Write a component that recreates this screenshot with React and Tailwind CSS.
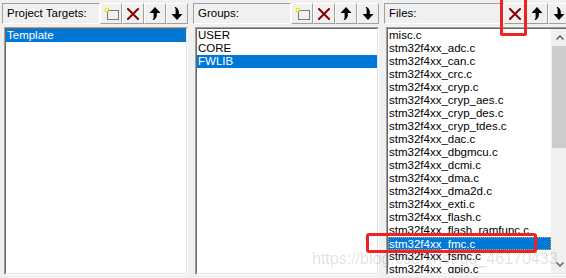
import React from "react";

function NewIcon() {
  return (
    <svg width="15" height="14" viewBox="0 0 15 14">
      <rect x="3.5" y="3.5" width="11" height="9" fill="none" stroke="#000" strokeDasharray="1 1" />
      <path d="M3 0.5v5M0.5 3h5M1 1l4 4M5 1l-4 4" stroke="#e8d800" strokeWidth="1" />
      <rect x="2" y="2" width="2" height="2" fill="#fff8a0" />
    </svg>
  );
}

function DelIcon() {
  return (
    <svg width="12" height="12" viewBox="0 0 12 12">
      <path d="M1 1L11 11M11 1L1 11" stroke="#8a0000" strokeWidth="2" strokeLinecap="square" />
    </svg>
  );
}

function UpIcon() {
  return (
    <svg width="12" height="13" viewBox="0 0 12 13">
      <path d="M6 0L11.5 6H7.8V9L6.6 11.4L4.8 13H3.6L4.6 11V6H0.5Z" fill="#000" />
    </svg>
  );
}

function DownIcon() {
  return (
    <svg width="12" height="13" viewBox="0 0 12 13">
      <path d="M6 13L11.5 7H7.8V4L6.6 1.6L4.8 0H3.6L4.6 2V7H0.5Z" fill="#000" />
    </svg>
  );
}

const ICONS = { new: NewIcon, del: DelIcon, up: UpIcon, down: DownIcon };

function Header({ label, buttons }) {
  return (
    <div className="flex h-[21px]">
      <div className="flex-1 flex items-center pl-[4px] border border-t-[#a0a0a0] border-l-[#a0a0a0] border-r-white border-b-white">
        {label}
      </div>
      {buttons.map((b) => {
        const I = ICONS[b];
        return (
          <div
            key={b}
            className="w-[22px] h-[21px] flex items-center justify-center border border-t-white border-l-white border-r-[#a0a0a0] border-b-[#a0a0a0] bg-[#f0f0f0]"
          >
            <I />
          </div>
        );
      })}
    </div>
  );
}

function Row({ text, selected, focus }) {
  return (
    <div
      className={
        "h-[13px] leading-[12px] whitespace-nowrap " +
        (selected ? "bg-[#0078d7] text-white " : "text-black ") +
        (focus ? "border border-dotted border-[#e8a040] pl-0" : "pl-[1px]")
      }
    >
      {text}
    </div>
  );
}

function ListBox({ children }) {
  return (
    <div className="ml-[2px] mt-[3px] h-[248px] border border-t-[#a0a0a0] border-l-[#a0a0a0] border-r-white border-b-white">
      <div className="h-full border border-t-[#696969] border-l-[#696969] border-r-[#e3e3e3] border-b-[#e3e3e3] bg-white overflow-hidden">
        {children}
      </div>
    </div>
  );
}

const files = [
  "misc.c",
  "stm32f4xx_adc.c",
  "stm32f4xx_can.c",
  "stm32f4xx_crc.c",
  "stm32f4xx_cryp.c",
  "stm32f4xx_cryp_aes.c",
  "stm32f4xx_cryp_des.c",
  "stm32f4xx_cryp_tdes.c",
  "stm32f4xx_dac.c",
  "stm32f4xx_dbgmcu.c",
  "stm32f4xx_dcmi.c",
  "stm32f4xx_dma.c",
  "stm32f4xx_dma2d.c",
  "stm32f4xx_exti.c",
  "stm32f4xx_flash.c",
  "stm32f4xx_flash_ramfunc.c",
  "stm32f4xx_fmc.c",
  "stm32f4xx_fsmc.c",
  "stm32f4xx_gpio.c",
  "stm32f4xx_hash.c",
];

export default function App() {
  return (
    <div
      className="relative w-[566px] h-[278px] bg-[#f0f0f0] overflow-hidden text-[11.5px] text-black"
      style={{ fontFamily: '"Liberation Sans", Arial, sans-serif' }}
    >
      <div className="flex gap-[5px] pl-[2px] pt-[3px]">
        <div className="w-[186px] shrink-0">
          <Header label="Project Targets:" buttons={["new", "del", "up", "down"]} />
          <ListBox>
            <Row text="Template" selected />
          </ListBox>
        </div>
        <div className="w-[186px] shrink-0">
          <Header label="Groups:" buttons={["new", "del", "up", "down"]} />
          <ListBox>
            <Row text="USER" />
            <Row text="CORE" />
            <Row text="FWLIB" selected />
          </ListBox>
        </div>
        <div className="w-[186px] shrink-0">
          <Header label="Files:" buttons={["del", "up", "down"]} />
          <ListBox>
            <div className="flex h-full">
              <div className="flex-1 overflow-hidden">
                {files.map((f) => (
                  <Row key={f} text={f} selected={f === "stm32f4xx_fmc.c"} focus={f === "stm32f4xx_fmc.c"} />
                ))}
              </div>
              <div className="w-[17px] flex flex-col bg-[#f0f0f0]">
                <div className="h-[17px] flex items-center justify-center">
                  <svg width="8" height="5" viewBox="0 0 8 5">
                    <path d="M0.5 4.5L4 1L7.5 4.5" fill="none" stroke="#606060" strokeWidth="1.5" />
                  </svg>
                </div>
                <div className="h-[102px] mx-[1px] bg-[#cdcdcd]" />
                <div className="flex-1" />
                <div className="h-[17px] flex items-center justify-center">
                  <svg width="8" height="5" viewBox="0 0 8 5">
                    <path d="M0.5 0.5L4 4L7.5 0.5" fill="none" stroke="#606060" strokeWidth="1.5" />
                  </svg>
                </div>
              </div>
            </div>
          </ListBox>
        </div>
      </div>

      <div
        className="absolute left-[312px] top-[250px] text-[16px] leading-[18px] whitespace-nowrap text-[rgba(0,0,0,0.13)] pointer-events-none"
      >
        https://blog.csdn.net/qq_46170433
      </div>

      <div className="absolute left-[500px] top-[-3px] w-[27px] h-[39px] border-[3px] border-[#ee2222] rounded-[2px] pointer-events-none" />
      <div className="absolute left-[366px] top-[233px] w-[171px] h-[20px] border-[3px] border-[#ee2222] rounded-[3px] pointer-events-none" />
    </div>
  );
}
